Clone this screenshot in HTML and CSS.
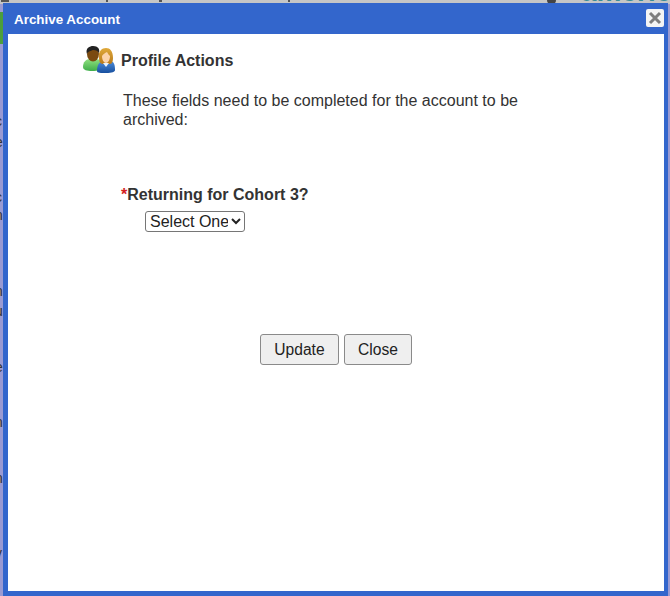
FILE: index.html
```html
<!DOCTYPE html>
<html lang="en">
<head>
    <meta charset="UTF-8">
    <meta name="viewport" content="width=device-width, initial-scale=1.0">
    <title>Archive Account</title>
    <link rel="stylesheet" href="styles.css">
</head>
<body>
    <!-- Page behind the dialog, only the edges show -->
    <div class="backdrop">
        <div class="top-strip">
            <span class="blob b1"></span>
            <span class="blob b2"></span>
            <span class="blob b3"></span>
            <span class="blob b4"></span>
            <span class="blob b5"></span>
            <span class="logo-text">americ</span>
        </div>
        <div class="green-tab"></div>
        <span class="edge-text e1">c</span>
        <span class="edge-text e2">e</span>
        <span class="edge-text e3">c</span>
        <span class="edge-text e4">n</span>
        <span class="edge-text e5">n</span>
        <span class="edge-text e6">u</span>
        <span class="edge-text e7">e</span>
        <span class="edge-text e8">n</span>
        <span class="edge-text e9">n</span>
        <span class="edge-text e10">t</span>
        <span class="edge-text e11">v</span>
    </div>

    <div class="dialog">
        <div class="dialog-title">
            <span>Archive Account</span>
            <button class="close-x" type="button" aria-label="Close">
                <svg width="14" height="14" viewBox="0 0 14 14">
                    <path d="M2 2 L12 12 M12 2 L2 12" stroke="#7d7d7d" stroke-width="3" fill="none"/>
                </svg>
            </button>
        </div>
        <div class="dialog-body">
            <div class="section-head">
                <svg class="people-icon" width="33" height="28" viewBox="0 0 33 28">
                    <defs>
                        <linearGradient id="shirt-green" x1="0" y1="0" x2="0" y2="1">
                            <stop offset="0" stop-color="#8fe07f"/>
                            <stop offset="1" stop-color="#3fae4a"/>
                        </linearGradient>
                        <linearGradient id="shirt-blue" x1="0" y1="0" x2="0" y2="1">
                            <stop offset="0" stop-color="#4d8ddb"/>
                            <stop offset="1" stop-color="#174f9f"/>
                        </linearGradient>
                        <linearGradient id="hair-orange" x1="0" y1="0" x2="0" y2="1">
                            <stop offset="0" stop-color="#e0a93a"/>
                            <stop offset="1" stop-color="#b87a1c"/>
                        </linearGradient>
                    </defs>
                    <!-- green person, behind -->
                    <path d="M0 21 C0 16 3 13 7 13 L13 13 C17 13 19 16 19 21 C19 24 15 25 9 25 C4 25 0 24 0 21 Z" fill="url(#shirt-green)"/>
                    <ellipse cx="10" cy="8" rx="6" ry="7.500" fill="#7a4a10"/>
                    <path d="M4 8 C2 2 7 0 10 0 C15 0 17 3 16 7 C15 5 13 4 10 4 C8 5 5 5 4 8 Z" fill="#222"/>
                    <!-- blue person, in front -->
                    <path d="M14 25 C14 18 17 15 21 15 L27 15 C31 15 32 19 32 24 C32 26 29 27 23 27 C18 27 14 27 14 25 Z" fill="url(#shirt-blue)"/>
                    <path d="M16 12 C15 5 19 2 23 2 C27 2 30 5 30 12 C30 15 29 18 27 18 L20 18 C17 18 16 15 16 12 Z" fill="url(#hair-orange)"/>
                    <path d="M19 10 C20 8 22 7 24 6 C25 8 26 9 27 10 C27 14 25 17 23 17 C21 17 19 14 19 10 Z" fill="#fcd3ab"/>
                    <path d="M20 17 L23 21 L26 17 Z" fill="#eaf2fb"/>
                </svg>
                <h2>Profile Actions</h2>
            </div>
            <p class="intro">These fields need to be completed for the account to be archived:</p>
            <div class="field">
                <label for="returning"><span class="req">*</span>Returning for Cohort 3?</label>
                <select id="returning" name="returning">
                    <option>Select One</option>
                </select>
            </div>
            <div class="button-group">
                <button class="btn-update" type="button">Update</button>
                <button class="btn-close" type="button">Close</button>
            </div>
        </div>
    </div>
</body>
</html>
```

FILE: styles.css
```css
/* General Styles */
html, body {
    height: 100%;
}

body {
    margin: 0;
    font-family: "Liberation Sans", Arial, sans-serif;
    color: #333;
    overflow: hidden;
}

/* Backdrop */
.backdrop {
    position: absolute;
    inset: 0;
    background-color: #9a9ad2;
}

.top-strip {
    position: absolute;
    left: 0;
    top: 0;
    width: 100%;
    height: 4px;
    background-color: #c6c6c6;
    overflow: hidden;
}

.blob {
    position: absolute;
    top: 0;
    height: 2px;
    background-color: #555;
}

.b1 { left: 1px; width: 8px; }
.b2 { left: 106px; width: 2px; }
.b3 { left: 159px; width: 3px; }
.b4 { left: 288px; width: 2px; }
.b5 { left: 547px; width: 9px; height: 4px; background-color: #444; border-radius: 0 0 5px 5px; }

.logo-text {
    position: absolute;
    left: 581px;
    top: -24px;
    font-size: 28px;
    line-height: 32px;
    font-weight: bold;
    color: #3a8d96;
}

.green-tab {
    position: absolute;
    left: 0;
    top: 12px;
    width: 3px;
    height: 32px;
    background-color: #4c9e3c;
}

.edge-text {
    position: absolute;
    left: -5px;
    font-size: 14px;
    line-height: 14px;
    color: #333;
}

.e1 { top: 114px; }
.e2 { top: 135px; }
.e3 { top: 190px; }
.e4 { top: 208px; }
.e5 { top: 284px; }
.e6 { top: 304px; }
.e7 { top: 360px; }
.e8 { top: 415px; }
.e9 { top: 471px; }
.e10 { top: 490px; }
.e11 { top: 546px; }

/* Dialog */
.dialog {
    position: absolute;
    left: 3px;
    top: 3px;
    width: 665px;
    height: 593px;
    box-sizing: border-box;
    display: flex;
    flex-direction: column;
    background-color: #3366cc;
    padding: 0 4px 5px 5px;
}

.dialog-title {
    height: 31px;
    flex: none;
    display: flex;
    align-items: center;
    justify-content: space-between;
    color: #fff;
    font-size: 13.4px;
    font-weight: bold;
    padding-left: 6px;
}

.dialog-title span {
    padding-top: 2px;
}

.close-x {
    width: 18px;
    height: 18px;
    margin-top: -1px;
    padding: 0;
    border: none;
    border-radius: 2px;
    background-color: #f4f4f4;
    display: flex;
    align-items: center;
    justify-content: center;
}

.dialog-body {
    flex: 1;
    background-color: #fff;
    padding: 12px 0 0 75px;
}

/* Profile header */
.section-head {
    display: flex;
    align-items: center;
    gap: 5px;
    height: 28px;
}

.section-head h2 {
    margin: 0;
    padding-top: 2px;
    font-size: 16px;
    font-weight: bold;
}

.people-icon {
    flex: none;
}

.intro {
    margin: 17px 0 0 40px;
    width: 410px;
    font-size: 16px;
    line-height: 19px;
}

/* Form */
.field {
    margin: 56px 0 0 38px;
}

.field label {
    display: block;
    font-size: 16px;
    font-weight: bold;
    line-height: 19px;
}

.req {
    color: #d32020;
}

.field select {
    display: block;
    margin: 7px 0 0 24px;
    width: 100px;
    height: 21px;
    font-family: inherit;
    font-size: 16px;
    color: #222;
    background-color: #fff;
    border: 1px solid #767676;
    border-radius: 3px;
}

.button-group {
    display: flex;
    gap: 5px;
    margin: 102px 0 0 177px;
}

.button-group button {
    height: 31px;
    padding: 0;
    font-family: inherit;
    font-size: 15.6px;
    color: #222;
    background-color: #efefef;
    border: 1px solid #8a8a8a;
    border-radius: 3px;
}

.btn-update {
    width: 79px;
}

.btn-close {
    width: 68px;
}
```
